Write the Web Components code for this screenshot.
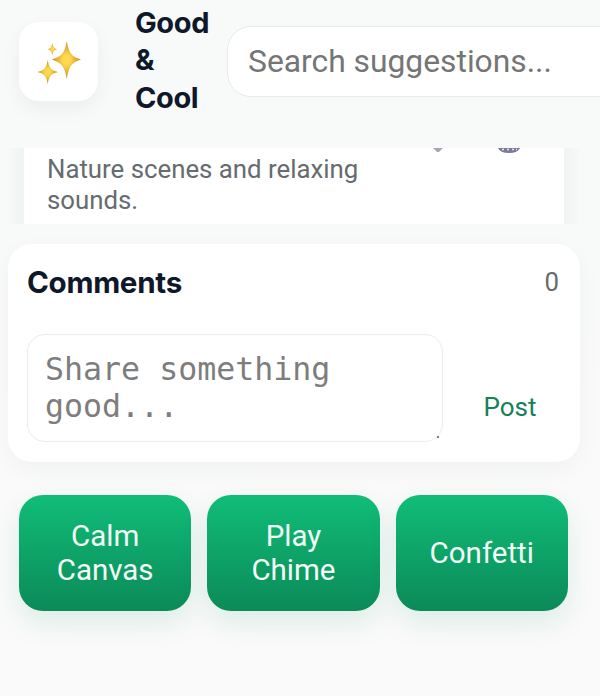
<!DOCTYPE html>
<html lang="en">
<head>
<meta charset="utf-8">
<title>Good &amp; Cool</title>
<style>
  html, body { margin: 0; height: 696px; overflow: hidden; }
  body {
    background: linear-gradient(#f7faf8, #fafafa);
    font-family: Roboto, "Liberation Sans", sans-serif;
    color: #0f172a;
  }
</style>
</head>
<body>
<app-header></app-header>
<suggestion-strip>Nature scenes and relaxing sounds.</suggestion-strip>
<comments-card></comments-card>
<action-bar>
  <action-button>Calm Canvas</action-button>
  <action-button>Play Chime</action-button>
  <action-button>Confetti</action-button>
</action-bar>

<script>
class AppHeader extends HTMLElement {
  connectedCallback() {
    this.attachShadow({ mode: 'open' });
    this.shadowRoot.innerHTML = `
      <style>
        :host {
          display: flex;
          align-items: center;
          height: 148px;
          box-sizing: border-box;
          padding: 0 0 26px 19px;
          width: 600px;
          overflow: hidden;
        }
        .logo {
          flex: none;
          width: 79px;
          height: 79px;
          border-radius: 20px;
          background: #fff;
          box-shadow: 0 8px 20px rgba(15,23,42,0.05);
          margin-right: 37px;
        }
        .logo svg { display: block; }
        .title {
          flex: none;
          width: 76px;
          margin: 0 16px 2px 0;
          font: 700 29px/37.5px Inter, Roboto, sans-serif;
          letter-spacing: -0.4px;
          color: #0f172a;
        }
        input {
          flex: none;
          width: 500px;
          height: 71px;
          box-sizing: border-box;
          border: 1.5px solid #e8eaea;
          border-radius: 24px;
          background: #fff;
          padding: 0 20px;
          font: 400 31.800px Roboto, sans-serif;
          outline: none;
        }
        input::placeholder { color: #757575; opacity: 1; }
      </style>
      <div class="logo">
        <svg width="79" height="79" viewBox="0 0 79 79">
          <defs>
            <radialGradient id="gold">
              <stop offset="0.25" stop-color="#fdd94f"/>
              <stop offset="1" stop-color="#c98a1a"/>
            </radialGradient>
          </defs>
          <path fill="url(#gold)" d="M47.800 19C49.500 30 52 34.500 62 37.500C52 40.500 49.500 46 47.800 57C46 46 43.500 41 33 37.500C43.500 34 46 30 47.800 19Z"/>
          <path fill="url(#gold)" d="M28.700 38C30 45.500 32 48.500 39 50C32 51.500 30 54.500 28.700 62C27.400 54.500 25.500 51.500 18.500 50C25.500 48.500 27.400 45.500 28.700 38Z"/>
          <path fill="url(#gold)" d="M33.300 21C34 25 35 26.500 38.200 27.300C35 28.200 34 29.600 33.300 33.500C32.600 29.600 31.600 28.200 28.500 27.300C31.600 26.500 32.600 25 33.300 21Z"/>
        </svg>
      </div>
      <div class="title">Good &amp; Cool</div>
      <input type="text" placeholder="Search suggestions...">
    `;
  }
}
customElements.define('app-header', AppHeader);

class SuggestionStrip extends HTMLElement {
  connectedCallback() {
    this.attachShadow({ mode: 'open' });
    this.shadowRoot.innerHTML = `
      <style>
        :host {
          display: block;
          width: 572px;
          height: 76px;
          margin-left: 8px;
          padding: 0 16px;
          box-sizing: border-box;
          overflow: hidden;
          background: linear-gradient(90deg, #f6f9f8, #eff3f2 16px, #eff3f2 556px, #f6f9f8);
        }
        .card {
          height: 76px;
          background: #fff;
          padding: 0 23px;
          box-sizing: border-box;
        }
        .peek {
          display: flex;
          height: 6px;
          padding-left: 384px;
          gap: 53px;
        }
        p {
          margin: 0;
          width: 340px;
          font: 400 25.800px/31px Roboto, sans-serif;
          color: #666b70;
        }
      </style>
      <div class="card">
        <div class="peek">
          <svg width="14" height="6" viewBox="0 0 14 6"><path d="M2 0H12L8 4H6Z" fill="#a9a5b8"/></svg>
          <svg width="22" height="6" viewBox="0 0 22 6"><path d="M0 0H22Q20 5 11 5Q2 5 0 0Z" fill="#7c7a9c"/><path d="M4 1.500H6M9 1.500H11M14 1.500H16M18 1.500H19" stroke="#e6e5ee" stroke-width="1.500"/></svg>
        </div>
        <p><slot></slot></p>
      </div>
    `;
  }
}
customElements.define('suggestion-strip', SuggestionStrip);

class CommentsCard extends HTMLElement {
  connectedCallback() {
    this.attachShadow({ mode: 'open' });
    this.shadowRoot.innerHTML = `
      <style>
        :host {
          display: block;
          width: 572px;
          height: 218px;
          margin: 20px 0 0 8px;
          padding: 19px 21px 20px 19px;
          box-sizing: border-box;
          background: #fff;
          border-radius: 24px;
          box-shadow: 0 8px 24px rgba(15,23,42,0.04);
        }
        header {
          display: flex;
          justify-content: space-between;
          align-items: center;
          height: 38px;
        }
        h2 {
          margin: 0;
          font: 700 29.600px/38px Inter, Roboto, sans-serif;
          letter-spacing: -0.3px;
          color: #0f172a;
        }
        .count {
          font: 400 25.800px Roboto, sans-serif;
          color: #666b70;
        }
        .row {
          display: flex;
          align-items: center;
          margin-top: 33px;
        }
        .box {
          flex: none;
          position: relative;
          width: 416px;
          height: 108px;
        }
        textarea {
          display: block;
          width: 100%;
          height: 100%;
          box-sizing: border-box;
          border: 1.500px solid #ebeded;
          border-radius: 18px;
          padding: 16px 17px;
          resize: none;
          outline: none;
          background: #fff;
          font: 400 31.600px/37px "DejaVu Sans Mono", monospace;
          overflow: hidden;
        }
        textarea::placeholder { color: #7d7d7d; opacity: 1; }
        .grip {
          position: absolute;
          right: 4px;
          bottom: 4px;
          width: 2px;
          height: 2px;
          border-radius: 50%;
          background: #555;
        }
        button {
          flex: 1;
          align-self: flex-end;
          height: 70px;
          border: 0;
          background: none;
          padding: 0 0 0 18px;
          font: 400 26px Roboto, sans-serif;
          color: #15805a;
        }
      </style>
      <header><h2>Comments</h2><span class="count">0</span></header>
      <div class="row">
        <div class="box">
          <textarea placeholder="Share something good..."></textarea>
          <span class="grip"></span>
        </div>
        <button>Post</button>
      </div>
    `;
  }
}
customElements.define('comments-card', CommentsCard);

class ActionBar extends HTMLElement {
  connectedCallback() {
    this.attachShadow({ mode: 'open' });
    this.shadowRoot.innerHTML = `
      <style>
        :host {
          display: grid;
          grid-template-columns: repeat(3, 172.300px);
          gap: 16px;
          margin: 33px 0 0 19px;
        }
      </style>
      <slot></slot>
    `;
  }
}
customElements.define('action-bar', ActionBar);

class ActionButton extends HTMLElement {
  connectedCallback() {
    this.attachShadow({ mode: 'open' });
    this.shadowRoot.innerHTML = `
      <style>
        :host {
          display: flex;
          align-items: center;
          justify-content: center;
          height: 116px;
          padding: 0 24px;
          box-sizing: border-box;
          border-radius: 24px;
          text-align: center;
          background: linear-gradient(#10bd78, #0c8a58);
          box-shadow: 0 12px 28px rgba(14,140,90,0.12);
          font: 400 29.500px/34px Roboto, sans-serif;
          color: #f2fbf7;
        }
      </style>
      <slot></slot>
    `;
  }
}
customElements.define('action-button', ActionButton);
</script>
</body>
</html>
